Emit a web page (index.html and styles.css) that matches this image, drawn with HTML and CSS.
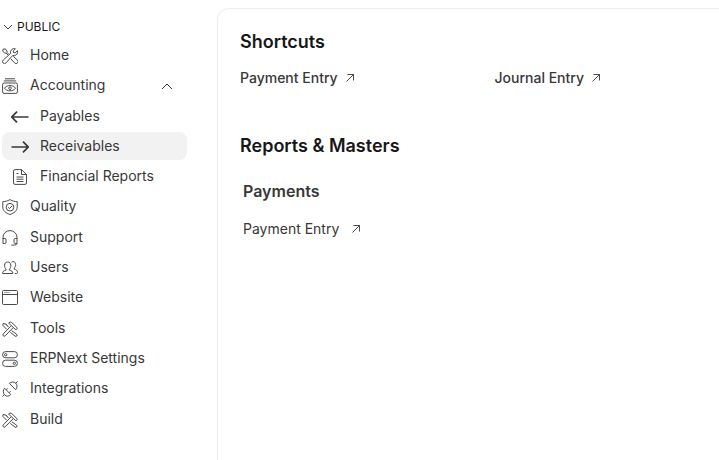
FILE: index.html
```html
<!DOCTYPE html>
<html lang="en">
<head>
  <meta charset="utf-8">
  <title>Receivables</title>
  <meta name="viewport" content="width=device-width, initial-scale=1.0">
  <link rel="stylesheet" href="styles.css">
</head>
<body>

  <!-- shared icons -->
  <svg class="sprite" aria-hidden="true">
    <symbol id="tools" viewBox="0 0 16 16">
      <path d="M6.700 6.200 3.700 3 1 2.600.7 4.200 4.600 8.200"/>
      <path d="M3.700 3 5.500 4.800M9.800 9.800l4.800 3.400q1 1 .2 1.800t-1.800 0L8.300 11.400"/>
      <path d="M6.600 2.200Q8 .2 9.700 1.500L14.900 6.500q.8 1 0 1.700t-1.700 0L11.300 6.500 3.200 14.800q-1 .9-1.900 0t0-1.900L9.300 4.600 8.200 3.500z"/>
      <path d="M9.300 4.600l2 1.900"/>
    </symbol>
  </svg>

  <div class="layout">
    <nav class="sidebar">
      <button class="section-toggle">
        <svg width="10" height="6" viewBox="0 0 10 6"><path d="M1 1l4 4 4-4"/></svg>
        PUBLIC
      </button>
      <ul class="menu">
        <li><a href="#">
          <svg class="icon" viewBox="0 0 16 16">
            <path d="M1 1.300 3.300.8l1.800 2.300-.2 1.200 2 2M1 1.300l-.3 2 2.200 1.900 1.200-.1 1.900 1.900"/>
            <path d="M13.400.8a3.700 3.700 0 0 0-4.800 4.600L1.300 12a2 2 0 1 0 2.800 2.800l6.600-7.300a3.700 3.700 0 0 0 4.700-4.700l-2.300 2.100-1.600-.4-.3-1.500z"/>
            <path d="M8.800 10.700l3.700 4.100a2 2 0 1 0 2.700-2.900l-3.900-3.600"/>
          </svg>
          <span>Home</span></a></li>
        <li>
          <a href="#">
            <svg class="icon" viewBox="0 0 16 16">
              <path d="M3 .8h10M1.800 2.900h12.400"/>
              <rect x=".6" y="5" width="14.800" height="10.400" rx="1.500"/>
              <path d="M2.500 10.200C4.500 6.700 11.500 6.700 13.500 10.200C11.500 13.700 4.500 13.700 2.500 10.200z"/>
              <circle cx="8" cy="10.200" r="1.300"/>
            </svg>
            <span>Accounting</span>
            <svg class="caret" viewBox="0 0 12 7"><path d="M1 6l5-5 5 5"/></svg>
          </a>
          <ul class="submenu">
            <li><a href="#">
              <svg class="icon arrow" viewBox="0 0 18 16"><path d="M17.500 8H1.200M6 2.700.8 8 6 13.300"/></svg>
              <span>Payables</span></a></li>
            <li><a href="#" class="active">
              <svg class="icon arrow" viewBox="0 0 18 16"><path d="M.5 8h16.300M12 2.700 17.200 8 12 13.300"/></svg>
              <span>Receivables</span></a></li>
            <li><a href="#">
              <svg class="icon file" viewBox="0 0 18 16">
                <path d="M4 .6h6.500l5 4.900v8.400q0 1.500-1.500 1.500H4q-1.500 0-1.500-1.500V2.100Q2.500.6 4 .6z"/>
                <path d="M10.500.6v4.900h5M5.500 4.500h2M5.500 8h7M5.500 10.200h7M5.500 12.500h7"/>
              </svg>
              <span>Financial Reports</span></a></li>
          </ul>
        </li>
        <li><a href="#">
          <svg class="icon" viewBox="0 0 16 16">
            <path d="M8 .6c2.500 1.500 4.700 2 7.200 2v5.600c0 3.500-3.200 6-7.200 7.300-4-1.300-7.200-3.800-7.200-7.300V2.600c2.500 0 4.700-.5 7.200-2z"/>
            <circle cx="8" cy="8.200" r="3.800"/>
            <path d="M6.200 8.200l1.300 1.400 2.500-2.700"/>
          </svg>
          <span>Quality</span></a></li>
        <li><a href="#">
          <svg class="icon" viewBox="0 0 16 16">
            <path d="M1 9V7.300a7 6.700 0 0 1 14 0V9"/>
            <path d="M1 8.500h1.800q1.200 0 1.200 1.200v2.600q0 1.200-1.200 1.200H1zM15 8.500h-1.800q-1.200 0-1.200 1.200v2.600q0 1.200 1.200 1.200H15z"/>
            <path d="M15 13.500q-.5 1.600-2.500 1.600H9.300"/>
          </svg>
          <span>Support</span></a></li>
        <li><a href="#">
          <svg class="icon" viewBox="0 0 16 16">
            <path d="M.6 13.500c0-2.200 1.200-2.800 3.400-3.400v-1C3 8.300 2.500 7 2.600 5.200 2.700 3 3.900 2 5.700 2s3 1 3.100 3.200c.1 1.800-.4 3.100-1.400 3.900v1c2.200.6 3.400 1.200 3.400 3.400z"/>
            <path d="M9.500 2.200q.6-.6 1.600-.6c1.500 0 2.400 1 2.500 2.900.1 1.500-.4 2.700-1.300 3.400v1.300c2 .5 3.200 1.200 3.200 3.300q0 1-1 1h-1.700"/>
          </svg>
          <span>Users</span></a></li>
        <li><a href="#">
          <svg class="icon" viewBox="0 0 16 16">
            <rect x=".5" y=".5" width="15" height="14" rx="1"/>
            <path d="M.5 4.500h15M2.500 2.500h1M4.500 2.500h1M6.500 2.500h1"/>
          </svg>
          <span>Website</span></a></li>
        <li><a href="#">
          <svg class="icon"><use href="#tools"/></svg>
          <span>Tools</span></a></li>
        <li><a href="#">
          <svg class="icon" viewBox="0 0 16 16">
            <rect x=".6" y=".6" width="14.800" height="6.200" rx="3"/>
            <rect x=".6" y="9.200" width="14.800" height="6.200" rx="3"/>
            <circle cx="3.700" cy="3.700" r="1.200"/>
            <circle cx="12.300" cy="12.300" r="1.200"/>
          </svg>
          <span>ERPNext Settings</span></a></li>
        <li><a href="#">
          <svg class="icon" viewBox="0 0 16 16">
            <path d="M2.600 7.200l6.200 6.300c-1.500 1.900-4.400 2.300-6.200.5s-1.600-5.200 0-6.800zM2.200 13.700.4 15.600M4.300 8.900l1.500-1.600M7.100 11.800l1.500-1.600"/>
            <path d="M7.400 2.400l6.300 6.300c1.600-1.700 1.900-4.700.1-6.500s-4.700-1.500-6.400.2zM13.800 2.200 15.600.4"/>
          </svg>
          <span>Integrations</span></a></li>
        <li><a href="#">
          <svg class="icon"><use href="#tools"/></svg>
          <span>Build</span></a></li>
      </ul>
    </nav>

    <main class="content">
      <h2>Shortcuts</h2>
      <div class="shortcuts">
        <a href="#">Payment Entry <svg class="go" viewBox="0 0 8 8"><path d="M.5 7.500l7-7M1.500.5h6v6"/></svg></a>
        <a href="#">Journal Entry <svg class="go" viewBox="0 0 8 8"><path d="M.5 7.500l7-7M1.500.5h6v6"/></svg></a>
      </div>

      <h2>Reports &amp; Masters</h2>
      <div class="links">
        <h3>Payments</h3>
        <a href="#">Payment Entry <svg class="go" viewBox="0 0 8 8"><path d="M.5 7.500l7-7M1.500.5h6v6"/></svg></a>
      </div>
    </main>
  </div>

</body>
</html>
```
FILE: styles.css
```css
* {
  box-sizing: border-box;
}
body {
  margin: 0;
  font-family: Inter, sans-serif;
  font-size: 14px;
  line-height: 20px;
  color: #383838;
  background: #fff;
}
a {
  color: inherit;
  text-decoration: none;
}
ul {
  list-style: none;
  margin: 0;
  padding: 0;
}
svg {
  fill: none;
  stroke: #383838;
  flex-shrink: 0;
}
.sprite {
  position: absolute;
  width: 0;
  height: 0;
}
.layout {
  display: grid;
  grid-template-columns: 187px 1fr;
  column-gap: 30px;
  min-height: 100vh;
}

/* sidebar */
.sidebar {
  padding: 15px 0 20px 2px;
}
.section-toggle {
  display: flex;
  align-items: center;
  gap: 4px;
  height: 22px;
  margin-bottom: 4px;
  padding: 0 1px;
  border: none;
  background: none;
  font: 12px Inter, sans-serif;
  color: #171717;
  cursor: pointer;
}
.section-toggle svg {
  width: 10px;
  margin-top: 2px;
}
.menu a {
  display: flex;
  align-items: center;
  gap: 12px;
  height: 28px;
  margin-bottom: 2px;
  border-radius: 8px;
}
.menu > li:nth-child(3n+4) {
  padding-top: 1px;
}
.icon {
  width: 16px;
  height: 16px;
  margin-top: 2px;
  stroke-width: 0.9;
}
.submenu {
  padding-top: 1px;
}
.submenu a {
  gap: 11px;
  padding-left: 9px;
}
.submenu .icon {
  width: 18px;
}
.submenu .arrow {
  stroke-width: 1.7;
}
.submenu .active {
  background: #f2f2f2;
}
.caret {
  width: 12px;
  height: 7px;
  margin: 3px 14px 0 auto;
}

/* workspace */
.content {
  margin-top: 8px;
  padding: 20px 0 20px 22px;
  border: 1px solid #ededed;
  border-width: 1px 0 0 1px;
  border-top-left-radius: 12px;
}
h2 {
  margin: 0;
  font-size: 18px;
  line-height: 26px;
  font-weight: 600;
  color: #171717;
}
h3 {
  margin: 0 0 16px;
  font-size: 16px;
  line-height: 24px;
  font-weight: 600;
}
.content a {
  display: flex;
  align-items: center;
  gap: 8px;
}
.go {
  width: 8px;
  height: 8px;
  stroke-width: 0.9;
}
.shortcuts {
  display: grid;
  grid-template-columns: 1fr 1fr;
  margin: 13px -30px 45px 0;
  font-weight: 500;
}
.links {
  padding: 20px 3px;
}
.links a {
  gap: 13px;
}
```
